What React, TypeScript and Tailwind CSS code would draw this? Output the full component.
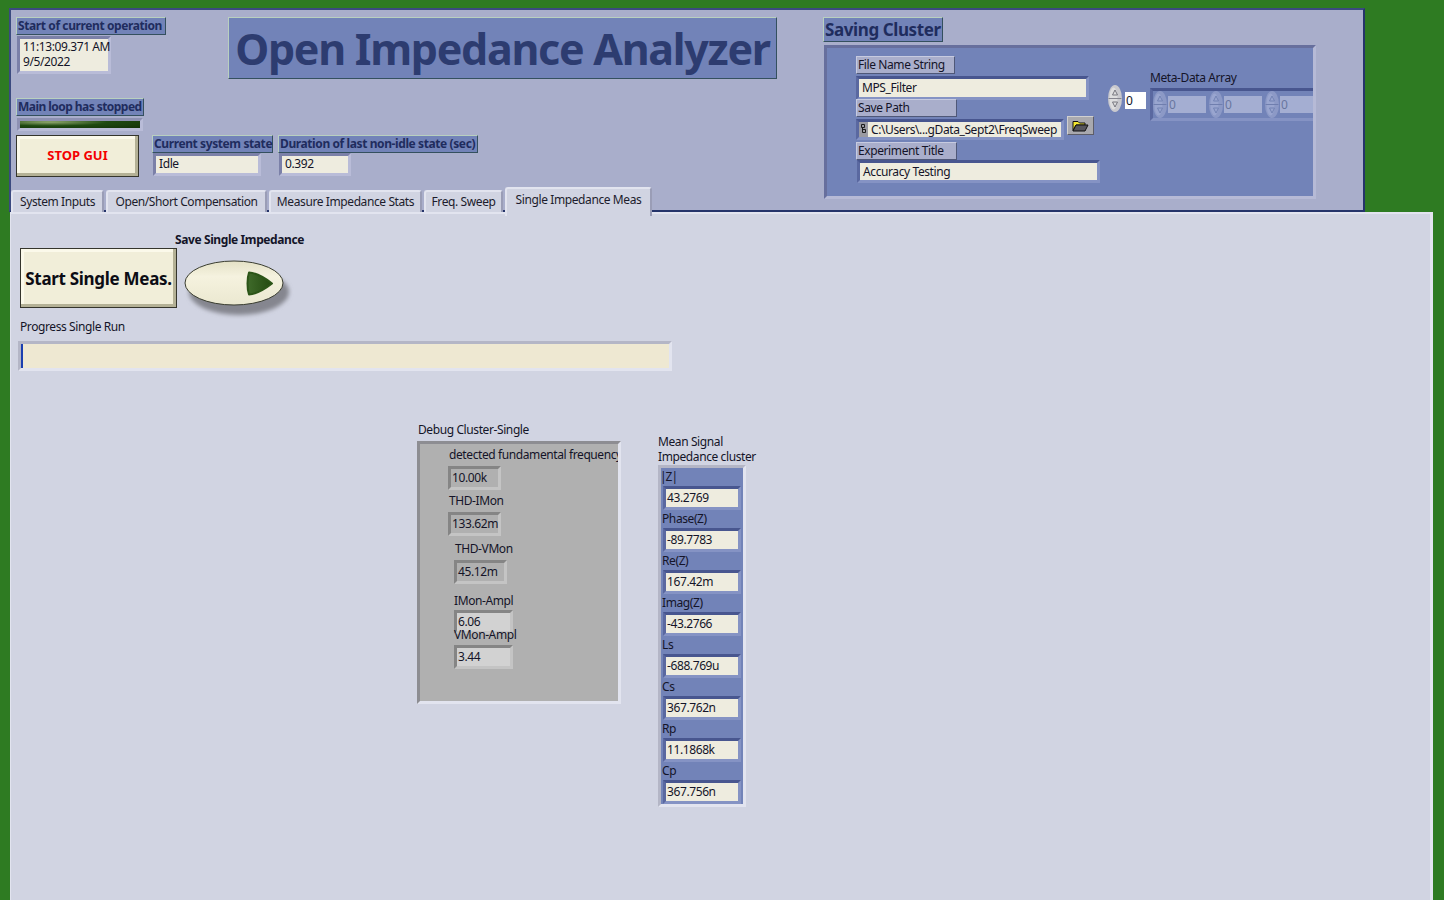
import { ReactNode } from 'react';

const font = "font-['Noto_Sans','Open_Sans',sans-serif]";

// LabVIEW style label plate on the top panel
function BlueLabel({ children, className = '' }: { children: ReactNode; className?: string }) {
  return (
    <div className={`flex h-[18px] items-center whitespace-nowrap border border-t-[#b9d0bf] border-l-[#b9d0bf] border-r-[#34505e] border-b-[#34505e] bg-[#7283b8] pl-[1px] text-[12px] font-bold text-[#1f2c5e] ${className}`}>
      {children}
    </div>
  );
}

function Readout({ children, className = '' }: { children: ReactNode; className?: string }) {
  return (
    <div className={`whitespace-nowrap border-[3px] border-t-[#7b80a8] border-l-[#7b80a8] border-r-[#b9bcd8] border-b-[#b9bcd8] bg-[#eeecdf] text-[12px] leading-[15px] text-[#141428] ${className}`}>
      {children}
    </div>
  );
}

function ClusterLabel({ children, className = '' }: { children: ReactNode; className?: string }) {
  return (
    <div className={`flex h-[18px] items-center border border-t-[#c7cbe0] border-l-[#c7cbe0] border-r-[#4f5878] border-b-[#4f5878] bg-[#a9aecb] pl-[1px] text-[12px] text-[#141428] ${className}`}>
      {children}
    </div>
  );
}

function ClusterField({ children, className = '' }: { children: ReactNode; className?: string }) {
  return (
    <div className={`border-[3px] border-t-[#48568f] border-l-[#5a68a0] border-r-[#8593c4] border-b-[#8593c4] bg-[#eeecdf] text-[12px] leading-[17px] text-[#141428] ${className}`}>
      {children}
    </div>
  );
}

function Spinner({ muted = false }: { muted?: boolean }) {
  const arrow = muted ? '#7383b4' : '#77777f';
  return (
    <svg width="14" height="27" viewBox="0 0 14 27" className="shrink-0">
      <ellipse cx="7" cy="13.5" rx="7" ry="13.5" fill={muted ? '#8c99c6' : '#c9c9ce'} />
      <ellipse cx="5.5" cy="13.5" rx="4" ry="11" fill={muted ? '#99a5cf' : '#dededf'} />
      <path d="M0.5 13.5H13.5" stroke={muted ? '#6f7eae' : '#85858f'} />
      <path d="M7 5L4.5 10H9.5Z" fill="none" stroke={arrow} />
      <path d="M7 22L4.5 17H9.5Z" fill="none" stroke={arrow} />
    </svg>
  );
}

function ArrayCell() {
  return (
    <div className="flex w-[56px] shrink-0 items-center gap-[1px]">
      <Spinner muted />
      <div className="h-[17px] w-[38px] bg-[#a4aed2] pl-[1px] text-[12px] leading-[17px] text-[#69769f]">0</div>
    </div>
  );
}

function Tab({ label, width, active = false }: { label: string; width: string; active?: boolean }) {
  return (
    <div
      className={`flex items-center justify-center whitespace-nowrap rounded-t-[3px] border-t-2 border-l-2 border-r-2 border-t-[#e2e4ef] border-l-[#e2e4ef] border-r-[#9a9db6] bg-[#d1d4e2] text-[12px] text-[#1c1c2c] ${width} ${active ? 'h-[29px] pb-[6px]' : 'h-[22px] pb-[1px]'}`}
    >
      {label}
    </div>
  );
}

function DebugField({ value, className }: { value: string; className: string }) {
  return (
    <div className={`border-[3px] border-t-[#858585] border-l-[#858585] border-r-[#c4c4c4] border-b-[#c4c4c4] pl-[1px] text-[12px] leading-[17px] text-[#141428] ${className}`}>
      {value}
    </div>
  );
}

const meanRows = [
  ['|Z|', '43.2769'],
  ['Phase(Z)', '-89.7783'],
  ['Re(Z)', '167.42m'],
  ['Imag(Z)', '-43.2766'],
  ['Ls', '-688.769u'],
  ['Cs', '367.762n'],
  ['Rp', '11.1868k'],
  ['Cp', '367.756n'],
];

export default function App() {
  return (
    <div className={`h-[900px] w-[1444px] overflow-hidden bg-[#2e7b22] pt-[8px] tracking-[-0.4px] ${font}`}>
      {/* top panel */}
      <div className="ml-[9px] flex h-[204px] w-[1356px] border-2 border-t-[#3b4a80] border-l-[#3b4a80] border-r-[#25346a] border-b-[#25346a] bg-[#a9aecb] pl-[5px] pt-[7px]">
        <div className="w-[808px] shrink-0">
          <div className="flex">
            <div className="w-[212px] shrink-0">
              <BlueLabel className="w-[150px]">Start of current operation</BlueLabel>
              <Readout className="ml-[1px] mt-[1px] h-[38px] w-[94px] pl-[3px]">
                11:13:09.371 AM
                <br />
                9/5/2022
              </Readout>
            </div>
            <div className="flex h-[62px] w-[549px] items-center justify-center whitespace-nowrap border border-t-[#b9d0bf] border-l-[#b9d0bf] border-r-[#34505e] border-b-[#34505e] bg-[#7283b8] text-[43px] font-bold leading-none tracking-[-1.3px] text-[#2d3c70]">
              Open Impedance Analyzer
            </div>
          </div>
          <BlueLabel className="mt-[19px] w-[128px] tracking-[-0.55px]">Main loop has stopped</BlueLabel>
          <div className="ml-[1px] mt-[2px] h-[13px] w-[126px] border-[3px] border-t-[#8d90b2] border-l-[#8d90b2] border-r-[#b9bcd8] border-b-[#b9bcd8] bg-[radial-gradient(ellipse_at_25%_15%,#8fa86e_0%,#1e4a10_45%,#123008_100%)]" />
          <div className="mt-[4px] flex">
            <div className="flex h-[42px] w-[123px] shrink-0 items-center justify-center border border-[#35352c] bg-[#f1eed9] text-[13px] font-bold tracking-normal text-[#f40000] shadow-[inset_-3px_-3px_0_#b4b196,inset_3px_3px_0_#fbf9ea]">
              STOP GUI
            </div>
            <div className="ml-[13px] w-[122px] shrink-0">
              <BlueLabel className="w-[121px]">Current system state</BlueLabel>
              <Readout className="ml-[1px] h-[23px] w-[108px] pl-[3px]">Idle</Readout>
            </div>
            <div className="ml-[4px]">
              <BlueLabel className="w-[200px]">Duration of last non-idle state (sec)</BlueLabel>
              <Readout className="ml-[1px] h-[23px] w-[72px] pl-[3px]">0.392</Readout>
            </div>
          </div>
        </div>

        {/* saving cluster */}
        <div className="-ml-[1px]">
          <div className="flex h-[25px] w-[120px] items-center whitespace-nowrap border border-t-[#b9d0bf] border-l-[#b9d0bf] border-r-[#34505e] border-b-[#34505e] bg-[#7283b8] pl-[1px] text-[17px] font-bold text-[#1f2c5e]">
            Saving Cluster
          </div>
          <div className="ml-[1px] mt-[3px] flex h-[154px] w-[492px] overflow-hidden border-[3px] border-t-[#676f9d] border-l-[#676f9d] border-r-[#b6bad6] border-b-[#b6bad6] bg-[#7283b8] pl-[29px] pt-[8px]">
            <div className="w-[250px] shrink-0">
              <ClusterLabel className="w-[99px]">File Name String</ClusterLabel>
              <ClusterField className="mt-[2px] h-[24px] w-[233px] pl-[3px]">MPS_Filter</ClusterField>
              <ClusterLabel className="-mt-[1px] w-[101px]">Save Path</ClusterLabel>
              <div className="mt-[2px] flex items-start">
                <div className="flex h-[21px] w-[208px] shrink-0 border-[3px] border-t-[#48568f] border-l-[#5a68a0] border-r-[#8593c4] border-b-[#8593c4] bg-[#eeecdf] text-[12px] leading-[15px] text-[#141428]">
                  <span className="flex w-[9px] shrink-0 items-center justify-center bg-[#9a9aa2]">
                    <svg width="5" height="11" viewBox="0 0 5 11">
                      <path d="M0.5 0.5H3.5V3.5H0.5ZM1.5 3.5V7.5M1.5 5.5H4.5V8.5H1.5Z" fill="none" stroke="#1c1c1c" />
                    </svg>
                  </span>
                  <span className="ml-[3px] whitespace-nowrap">C:\Users\...gData_Sept2\FreqSweep</span>
                </div>
                <div className="-mt-[3px] ml-[3px] flex h-[19px] w-[27px] shrink-0 items-center justify-center border border-t-[#d0d0d0] border-l-[#d0d0d0] border-r-[#5d5d68] border-b-[#5d5d68] bg-[#a9a9ae]">
                  <svg width="17" height="12" viewBox="0 0 17 12">
                    <path d="M1 1.5H6L7.5 3H13V5H4L1 10.5Z" fill="#f4e830" stroke="#111" />
                    <path d="M4 5H16L13 11H1Z" fill="#55555c" stroke="#111" />
                  </svg>
                </div>
              </div>
              <ClusterLabel className="mt-[2px] w-[101px]">Experiment Title</ClusterLabel>
              <ClusterField className="ml-[1px] h-[23px] w-[243px] pl-[3px]">Accuracy Testing</ClusterField>
            </div>
            <div className="ml-[2px] flex flex-col">
              <div className="mt-[14px] pl-[42px] text-[12px] leading-[15px] text-[#141428]">Meta-Data Array</div>
              <div className="flex items-start">
                <div className="flex w-[42px] shrink-0 items-center gap-[3px]">
                  <Spinner />
                  <div className="mt-[4px] h-[17px] w-[21px] bg-white pl-[1px] text-[12px] leading-[17px] text-[#141428]">0</div>
                </div>
                <div className="mt-[3px] flex h-[33px] w-[200px] items-center gap-0 border-[3px] border-t-[#48568f] border-l-[#5a68a0] border-r-0 border-b-[#8593c4]">
                  <ArrayCell />
                  <ArrayCell />
                  <ArrayCell />
                </div>
              </div>
            </div>
          </div>
        </div>
      </div>

      {/* tabs */}
      <div className="relative z-10 ml-[11px] -mt-[25px] flex h-[29px] items-end gap-[2px]">
        <div className="mb-[4px] flex gap-[2px]">
          <Tab label="System Inputs" width="w-[93px]" />
          <Tab label="Open/Short Compensation" width="w-[161px]" />
          <Tab label="Measure Impedance Stats" width="w-[153px]" />
          <Tab label="Freq. Sweep" width="w-[79px]" />
        </div>
        <Tab label="Single Impedance Meas" width="w-[147px]" active />
      </div>

      {/* tab body */}
      <div className="ml-[10px] -mt-[4px] h-[690px] w-[1423px] border-t-[2px] border-r-[3px] border-l-[1px] border-t-[#e2e4ef] border-r-[#e2e4ef] border-l-[#e2e4ef] bg-[#d1d4e2] pl-[9px] text-[12px] text-[#141428]">
        <div className="flex">
          <div className="mt-[34px] flex h-[60px] w-[157px] shrink-0 items-center justify-center whitespace-nowrap border border-[#35352c] bg-[#f1eed9] pt-[1px] text-[17px] font-bold tracking-[-0.3px] text-[#0c0c14] shadow-[inset_-3px_-3px_0_#b4b196,inset_3px_3px_0_#fbf9ea]">
            Start Single Meas.
          </div>
          <div className="-ml-[2px] pt-[18px]">
            <div className="h-[16px] whitespace-nowrap text-[12px] font-bold leading-[16px]">Save Single Impedance</div>
            <svg width="120" height="60" viewBox="0 0 120 60" className="mt-[11px]">
              <defs>
                <linearGradient id="toggleFace" x1="0" y1="0" x2="0" y2="1">
                  <stop offset="0" stopColor="#e4e1c6" />
                  <stop offset="0.35" stopColor="#f5f2df" />
                  <stop offset="1" stopColor="#ebe8d0" />
                </linearGradient>
                <linearGradient id="toggleLed" x1="0" y1="0" x2="1" y2="0">
                  <stop offset="0" stopColor="#3f6a2a" />
                  <stop offset="1" stopColor="#234a10" />
                </linearGradient>
                <filter id="toggleBlur" x="-20%" y="-20%" width="140%" height="140%">
                  <feGaussianBlur stdDeviation="2" />
                </filter>
              </defs>
              <ellipse cx="64" cy="33" rx="50" ry="23" fill="#85868f" filter="url(#toggleBlur)" />
              <ellipse cx="59" cy="24" rx="49" ry="22" fill="url(#toggleFace)" stroke="#3a3d30" strokeWidth="1" />
              <path d="M74 13.5C81 14 90 19 97 24.5C90 30 81 35 74 35.5C72 30 72 19 74 13.5Z" fill="url(#toggleLed)" stroke="#2c5518" strokeWidth="2" strokeLinejoin="round" />
            </svg>
          </div>
        </div>
        <div className="h-[16px] whitespace-nowrap leading-[16px]">Progress Single Run</div>
        <div className="-ml-[2px] mt-[6px] h-[30px] w-[654px] border-[3px] border-t-[#b4b6c6] border-l-[#b4b6c6] border-r-[#e2e4ef] border-b-[#e2e4ef] bg-[#eee8d2]">
          <div className="h-full w-[2px] bg-[#1b3fb0]" />
        </div>

        <div className="ml-[398px] mt-[51px] flex">
          <div className="w-[240px] shrink-0">
            <div className="h-[16px] whitespace-nowrap leading-[16px]">Debug Cluster-Single</div>
            <div className="-ml-[1px] mt-[3px] h-[263px] w-[204px] overflow-hidden border-[3px] border-t-[#8d8d92] border-l-[#8d8d92] border-r-[#e2e4ef] border-b-[#e2e4ef] bg-[#b0b0b0] pt-[3px]">
              <div className="h-[16px] whitespace-nowrap pl-[29px] leading-[16px]">detected fundamental frequency</div>
              <DebugField value="10.00k" className="ml-[28px] mt-[3px] h-[24px] w-[53px]" />
              <div className="ml-[29px] mt-[3px] h-[16px] leading-[16px]">THD-IMon</div>
              <DebugField value="133.62m" className="ml-[28px] mt-[3px] h-[24px] w-[53px]" />
              <div className="ml-[35px] mt-[5px] h-[16px] leading-[16px]">THD-VMon</div>
              <DebugField value="45.12m" className="ml-[34px] mt-[3px] h-[24px] w-[53px]" />
              <div className="ml-[34px] mt-[9px] h-[16px] leading-[16px]">IMon-Ampl</div>
              <DebugField value="6.06" className="ml-[34px] mt-[1px] h-[24px] w-[59px] bg-[#d2d2d2] leading-[14px]" />
              <div className="relative ml-[34px] -mt-[5px] h-[12px] leading-[12px]">VMon-Ampl</div>
              <DebugField value="3.44" className="ml-[34px] mt-[4px] h-[24px] w-[59px] bg-[#d2d2d2]" />
            </div>
          </div>
          <div className="pt-[12px]">
            <div className="whitespace-nowrap leading-[15px]">
              Mean Signal
              <br />
              Impedance cluster
            </div>
            <div className="mt-[1px] w-[88px] border-[3px] border-t-[#b4b6c6] border-l-[#b4b6c6] border-r-[#e2e4ef] border-b-[#e2e4ef] bg-[#7283b8]">
              {meanRows.map(([label, value]) => (
                <div key={label} className="h-[42px]">
                  <div className={`h-[18px] pl-[1px] leading-[17px] ${label === '|Z|' ? '-ml-[2px] tracking-[-1px]' : ''}`}>{label}</div>
                  <ClusterField className="ml-[2px] h-[24px] w-[78px] pl-[1px]">{value}</ClusterField>
                </div>
              ))}
            </div>
          </div>
        </div>
      </div>
    </div>
  );
}
